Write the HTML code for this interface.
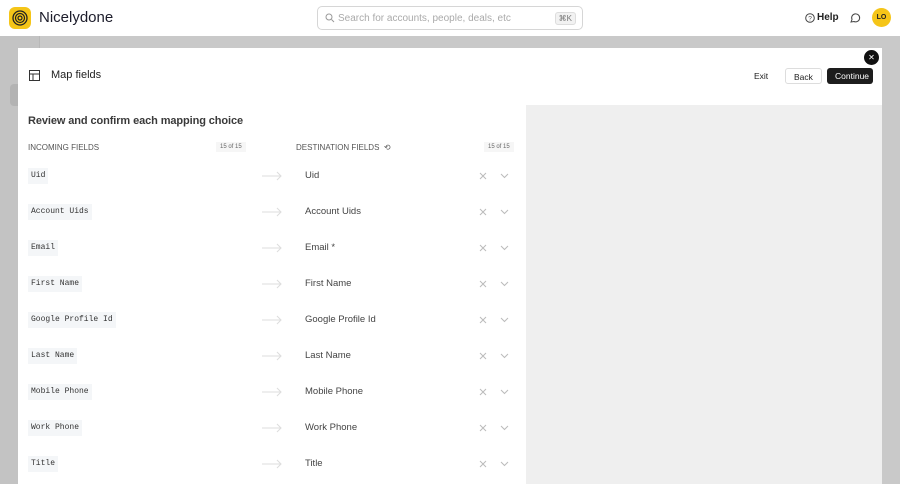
<!DOCTYPE html><html><head><style>
*{box-sizing:border-box;margin:0;padding:0}
html{width:900px;height:484px;overflow:hidden;background:#c9c9c9}
body{width:900px;height:484px;overflow:hidden;font-family:"Liberation Sans",sans-serif;background:#c9c9c9;position:relative;color:#222}
.top{position:absolute;left:0;top:0;width:900px;height:36px;background:#fff}
.logo{position:absolute;left:9px;top:7px;width:22px;height:22px;border-radius:6px;background:#f5c518}
.brand{position:absolute;left:39px;top:9px;font-size:15px;color:#1d1d2b}
.search{position:absolute;left:317px;top:6px;width:266px;height:24px;border:1px solid #d6d6d6;border-radius:5px;font-size:10px;color:#aaa;padding:6px 0 0 20px}
.kbd{position:absolute;right:6px;top:5px;font-size:8px;background:#f2f2f2;border:1px solid #ddd;border-radius:3px;padding:1px 3px;color:#777}
.side{position:absolute;left:0;top:36px;width:40px;height:448px;background:#c3c3c3;border-right:1px solid #b8b8b8}
.modal{position:absolute;left:18px;top:48px;width:864px;height:436px;background:#fff}
.rp{position:absolute;left:508px;top:57px;width:356px;height:379px;background:#efefef}
.btn{position:absolute;top:20px;height:16px;font-size:8.5px;border-radius:3px;padding:3px 8px}
.lab{position:absolute;top:95px;font-size:8px;color:#555}
.cnt{position:absolute;top:94px;font-size:6px;color:#666;background:#f6f6f6;padding:2px 4px}
.row{position:absolute;left:0;width:508px;height:36px}
.row>*{position:absolute;display:block;line-height:12px;height:12px;top:-6px}
.row svg{display:block}
.code{left:10px;top:-8px!important;height:16px!important;font-family:"Liberation Mono",monospace;font-size:8px;background:#f4f6f8;padding:2px 3px;color:#333}
.dst{left:287px;font-size:9.5px;color:#444}
.arr{left:244px}
.x{left:461px;padding-top:2px}
.c{left:482px;padding-top:2px}
</style></head><body>
<div class="top">
<div class="logo"><svg width="22" height="22"><circle cx="11" cy="11" r="7" fill="none" stroke="#222" stroke-width="1.3"/><circle cx="11" cy="11" r="4.5" fill="none" stroke="#222" stroke-width="1.2"/><circle cx="11" cy="11" r="2" fill="none" stroke="#222" stroke-width="1.2"/></svg></div>
<div class="brand">Nicelydone</div>
<div class="search"><svg style="position:absolute;left:7px;top:6px" width="10" height="10"><circle cx="4" cy="4" r="3" fill="none" stroke="#999"/><path d="M6.5 6.5L9 9" stroke="#999"/></svg>Search for accounts, people, deals, etc<span class="kbd">⌘K</span></div>
<svg style="position:absolute;left:805px;top:13px" width="10" height="10"><circle cx="5" cy="5" r="4.3" fill="none" stroke="#444"/><text x="5" y="7.5" font-size="6.5" text-anchor="middle" fill="#444" font-family="Liberation Sans">?</text></svg>
<div style="position:absolute;left:817px;top:12px;font-size:10px;color:#222;font-weight:bold">Help</div>
<svg style="position:absolute;left:849px;top:12px" width="12" height="12"><path d="M2 10L3 7.5A4 4 0 1 1 5 9.5Z" fill="none" stroke="#444"/></svg>
<div style="position:absolute;left:872px;top:8px;width:19px;height:19px;border-radius:50%;background:#f5c518;font-size:7px;font-weight:bold;text-align:center;line-height:19px">LO</div>
</div>
<div class="side"><div style="position:absolute;left:10px;top:48px;width:20px;height:22px;background:#b3b3b3;border-radius:4px"></div></div>
<div class="modal">
<svg style="position:absolute;left:11px;top:22px" width="11" height="11"><rect x=".5" y=".5" width="10" height="10" fill="none" stroke="#333"/><path d="M.5 4H10.5M4 4V10.5" stroke="#333"/></svg>
<div style="position:absolute;left:33px;top:21px;font-size:11px">Map fields</div>
<div class="btn" style="left:728px;color:#222">Exit</div>
<div class="btn" style="left:767px;border:1px solid #ddd">Back</div>
<div class="btn" style="left:809px;background:#1d1d1d;color:#fff;width:46px">Continue</div>
<div class="rp"></div>
<div style="position:absolute;left:10px;top:67px;font-size:11px;color:#3a3a3a;font-weight:bold;letter-spacing:-.1px">Review and confirm each mapping choice</div>
<div class="lab" style="left:10px">INCOMING FIELDS</div><div class="cnt" style="left:198px">15 of 15</div>
<div class="lab" style="left:278px">DESTINATION FIELDS &nbsp;⟲</div><div class="cnt" style="left:466px">15 of 15</div>
</div>
<div style="position:absolute;left:864px;top:50px;width:15px;height:15px;border-radius:50%;background:#111;color:#fff;font-size:8px;text-align:center;line-height:15px">✕</div>
<div style="position:absolute;left:18px;top:50px">
<div class="row" style="top:126px"><span class="code">Uid</span><span class="arr"><svg width="22" height="12"><path d="M0 6H19M15 2L19 6L15 10" fill="none" stroke="#ddd"/></svg></span><span class="dst">Uid</span><span class="x"><svg width="8" height="8"><path d="M1 1L7 7M7 1L1 7" stroke="#bbb"/></svg></span><span class="c"><svg width="9" height="8"><path d="M1 2L4.5 5.5L8 2" fill="none" stroke="#bbb"/></svg></span></div>
<div class="row" style="top:162px"><span class="code">Account Uids</span><span class="arr"><svg width="22" height="12"><path d="M0 6H19M15 2L19 6L15 10" fill="none" stroke="#ddd"/></svg></span><span class="dst">Account Uids</span><span class="x"><svg width="8" height="8"><path d="M1 1L7 7M7 1L1 7" stroke="#bbb"/></svg></span><span class="c"><svg width="9" height="8"><path d="M1 2L4.5 5.5L8 2" fill="none" stroke="#bbb"/></svg></span></div>
<div class="row" style="top:198px"><span class="code">Email</span><span class="arr"><svg width="22" height="12"><path d="M0 6H19M15 2L19 6L15 10" fill="none" stroke="#ddd"/></svg></span><span class="dst">Email *</span><span class="x"><svg width="8" height="8"><path d="M1 1L7 7M7 1L1 7" stroke="#bbb"/></svg></span><span class="c"><svg width="9" height="8"><path d="M1 2L4.5 5.5L8 2" fill="none" stroke="#bbb"/></svg></span></div>
<div class="row" style="top:234px"><span class="code">First Name</span><span class="arr"><svg width="22" height="12"><path d="M0 6H19M15 2L19 6L15 10" fill="none" stroke="#ddd"/></svg></span><span class="dst">First Name</span><span class="x"><svg width="8" height="8"><path d="M1 1L7 7M7 1L1 7" stroke="#bbb"/></svg></span><span class="c"><svg width="9" height="8"><path d="M1 2L4.5 5.5L8 2" fill="none" stroke="#bbb"/></svg></span></div>
<div class="row" style="top:270px"><span class="code">Google Profile Id</span><span class="arr"><svg width="22" height="12"><path d="M0 6H19M15 2L19 6L15 10" fill="none" stroke="#ddd"/></svg></span><span class="dst">Google Profile Id</span><span class="x"><svg width="8" height="8"><path d="M1 1L7 7M7 1L1 7" stroke="#bbb"/></svg></span><span class="c"><svg width="9" height="8"><path d="M1 2L4.5 5.5L8 2" fill="none" stroke="#bbb"/></svg></span></div>
<div class="row" style="top:306px"><span class="code">Last Name</span><span class="arr"><svg width="22" height="12"><path d="M0 6H19M15 2L19 6L15 10" fill="none" stroke="#ddd"/></svg></span><span class="dst">Last Name</span><span class="x"><svg width="8" height="8"><path d="M1 1L7 7M7 1L1 7" stroke="#bbb"/></svg></span><span class="c"><svg width="9" height="8"><path d="M1 2L4.5 5.5L8 2" fill="none" stroke="#bbb"/></svg></span></div>
<div class="row" style="top:342px"><span class="code">Mobile Phone</span><span class="arr"><svg width="22" height="12"><path d="M0 6H19M15 2L19 6L15 10" fill="none" stroke="#ddd"/></svg></span><span class="dst">Mobile Phone</span><span class="x"><svg width="8" height="8"><path d="M1 1L7 7M7 1L1 7" stroke="#bbb"/></svg></span><span class="c"><svg width="9" height="8"><path d="M1 2L4.5 5.5L8 2" fill="none" stroke="#bbb"/></svg></span></div>
<div class="row" style="top:378px"><span class="code">Work Phone</span><span class="arr"><svg width="22" height="12"><path d="M0 6H19M15 2L19 6L15 10" fill="none" stroke="#ddd"/></svg></span><span class="dst">Work Phone</span><span class="x"><svg width="8" height="8"><path d="M1 1L7 7M7 1L1 7" stroke="#bbb"/></svg></span><span class="c"><svg width="9" height="8"><path d="M1 2L4.5 5.5L8 2" fill="none" stroke="#bbb"/></svg></span></div>
<div class="row" style="top:414px"><span class="code">Title</span><span class="arr"><svg width="22" height="12"><path d="M0 6H19M15 2L19 6L15 10" fill="none" stroke="#ddd"/></svg></span><span class="dst">Title</span><span class="x"><svg width="8" height="8"><path d="M1 1L7 7M7 1L1 7" stroke="#bbb"/></svg></span><span class="c"><svg width="9" height="8"><path d="M1 2L4.5 5.5L8 2" fill="none" stroke="#bbb"/></svg></span></div>
</div>
</body></html>
